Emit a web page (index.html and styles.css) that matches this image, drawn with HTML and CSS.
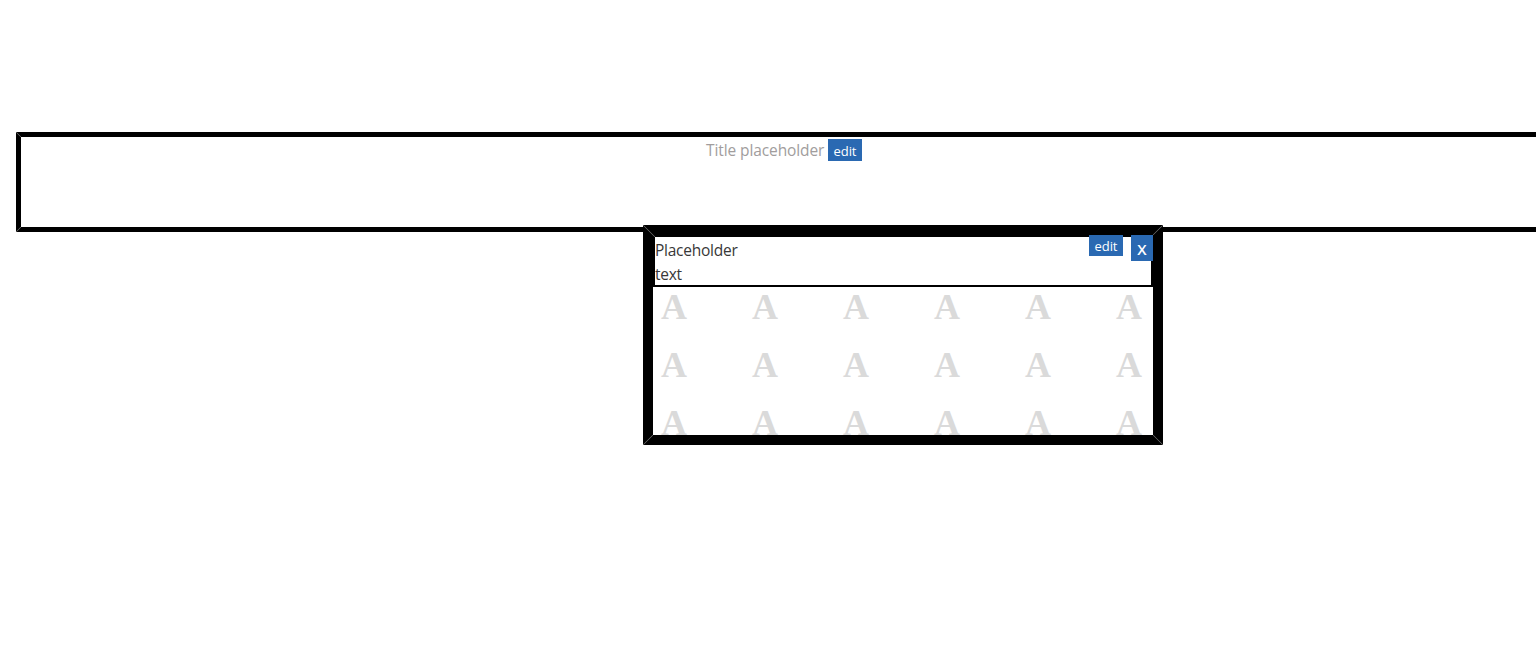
FILE: index.html
```html
<!DOCTYPE html>
<html lang="en">
<head>
<meta charset="utf-8">
<title>Page editor</title>
<link rel="stylesheet" href="styles.css">
</head>
<body>
<header class="title-box mitred">
  <span class="title-text">Title placeholder</span>
  <button class="btn edit">edit</button>
</header>
<main class="panel mitred">
  <section class="note">
    <p class="note-text">Placeholder text</p>
    <div class="tools"><button class="btn edit">edit</button><button class="btn close">X</button></div>
  </section>
  <div class="tiles">
    <span>A</span><span>A</span><span>A</span><span>A</span><span>A</span><span>A</span>
    <span>A</span><span>A</span><span>A</span><span>A</span><span>A</span><span>A</span>
    <span>A</span><span>A</span><span>A</span><span>A</span><span>A</span><span>A</span>
  </div>
</main>
</body>
</html>
```
FILE: styles.css
```css
* { box-sizing: border-box; }
html { overflow: hidden; }
body {
  margin: 0;
  height: 654px;
  padding: 132px 0 0 16px;
  overflow: hidden;
  background: #fff;
  font-family: "Open Sans", "Noto Sans", sans-serif;
  font-size: 16px;
  line-height: 24px;
}
.title-box {
  --edge: 5px;
  --top-seam: 5px;
  display: flex;
  justify-content: center;
  align-items: flex-start;
  gap: 4px;
  width: 1536px;
  height: 100px;
  padding-top: 2px;
  border: 5px solid #000;
}
/* hairline seams where the border sides meet */
.mitred { position: relative; }
.mitred::after {
  --down: linear-gradient(45deg, transparent calc(50% - .8px), #555 50%, transparent calc(50% + .8px));
  --up: linear-gradient(135deg, transparent calc(50% - .8px), #555 50%, transparent calc(50% + .8px));
  content: "";
  position: absolute;
  inset: calc(-1 * var(--edge));
  pointer-events: none;
  background:
    var(--down) left top / var(--top-seam) var(--top-seam) no-repeat,
    var(--up) right top / var(--edge) var(--edge) no-repeat,
    var(--up) left bottom / var(--edge) var(--edge) no-repeat,
    var(--down) right bottom / var(--edge) var(--edge) no-repeat;
}
.title-text {
  width: 118px;
  color: #a19d9d;
  font-size: 15.5px;
  line-height: 23px;
  letter-spacing: -0.1px;
  white-space: nowrap;
}
.btn {
  display: block;
  padding: 0;
  border: 0;
  background: #2a69b2;
  color: #fff;
  font-family: inherit;
}
.edit {
  width: 34px;
  height: 22px;
  font-size: 13px;
  font-weight: 500;
  line-height: 24px;
  letter-spacing: -0.1px;
}
.panel {
  --edge: 10px;
  --top-seam: 12px;
  width: 520px;
  height: 220px;
  margin: -7px 0 0 627px;
  border: 10px solid #000;
  background: #fff;
}
.note {
  display: flex;
  justify-content: space-between;
  height: 52px;
  border: 2px solid #000;
}
.note-text {
  width: 90px;
  margin: 1px 0 0;
  color: #383838;
  font-size: 15.5px;
  letter-spacing: -0.25px;
}
.tools {
  display: flex;
  align-items: flex-start;
  gap: 8px;
  margin: -2px -2px 0 0;
}
.tools .edit { height: 21px; line-height: 22px; }
.close {
  width: 22px;
  height: 26px;
  font-size: 15px;
  font-weight: 600;
  line-height: 28px;
}
.tiles {
  display: grid;
  grid-template-columns: repeat(6, 91px);
  grid-auto-rows: 58px;
  width: 500px;
  height: 148px;
  padding: 7px 0 0 8px;
  color: #dadada;
  font-family: "Liberation Serif", serif;
  font-size: 36px;
  font-weight: bold;
  line-height: 26px;
}
.tiles span {
  width: 27px;
  height: 26px;
}
```
